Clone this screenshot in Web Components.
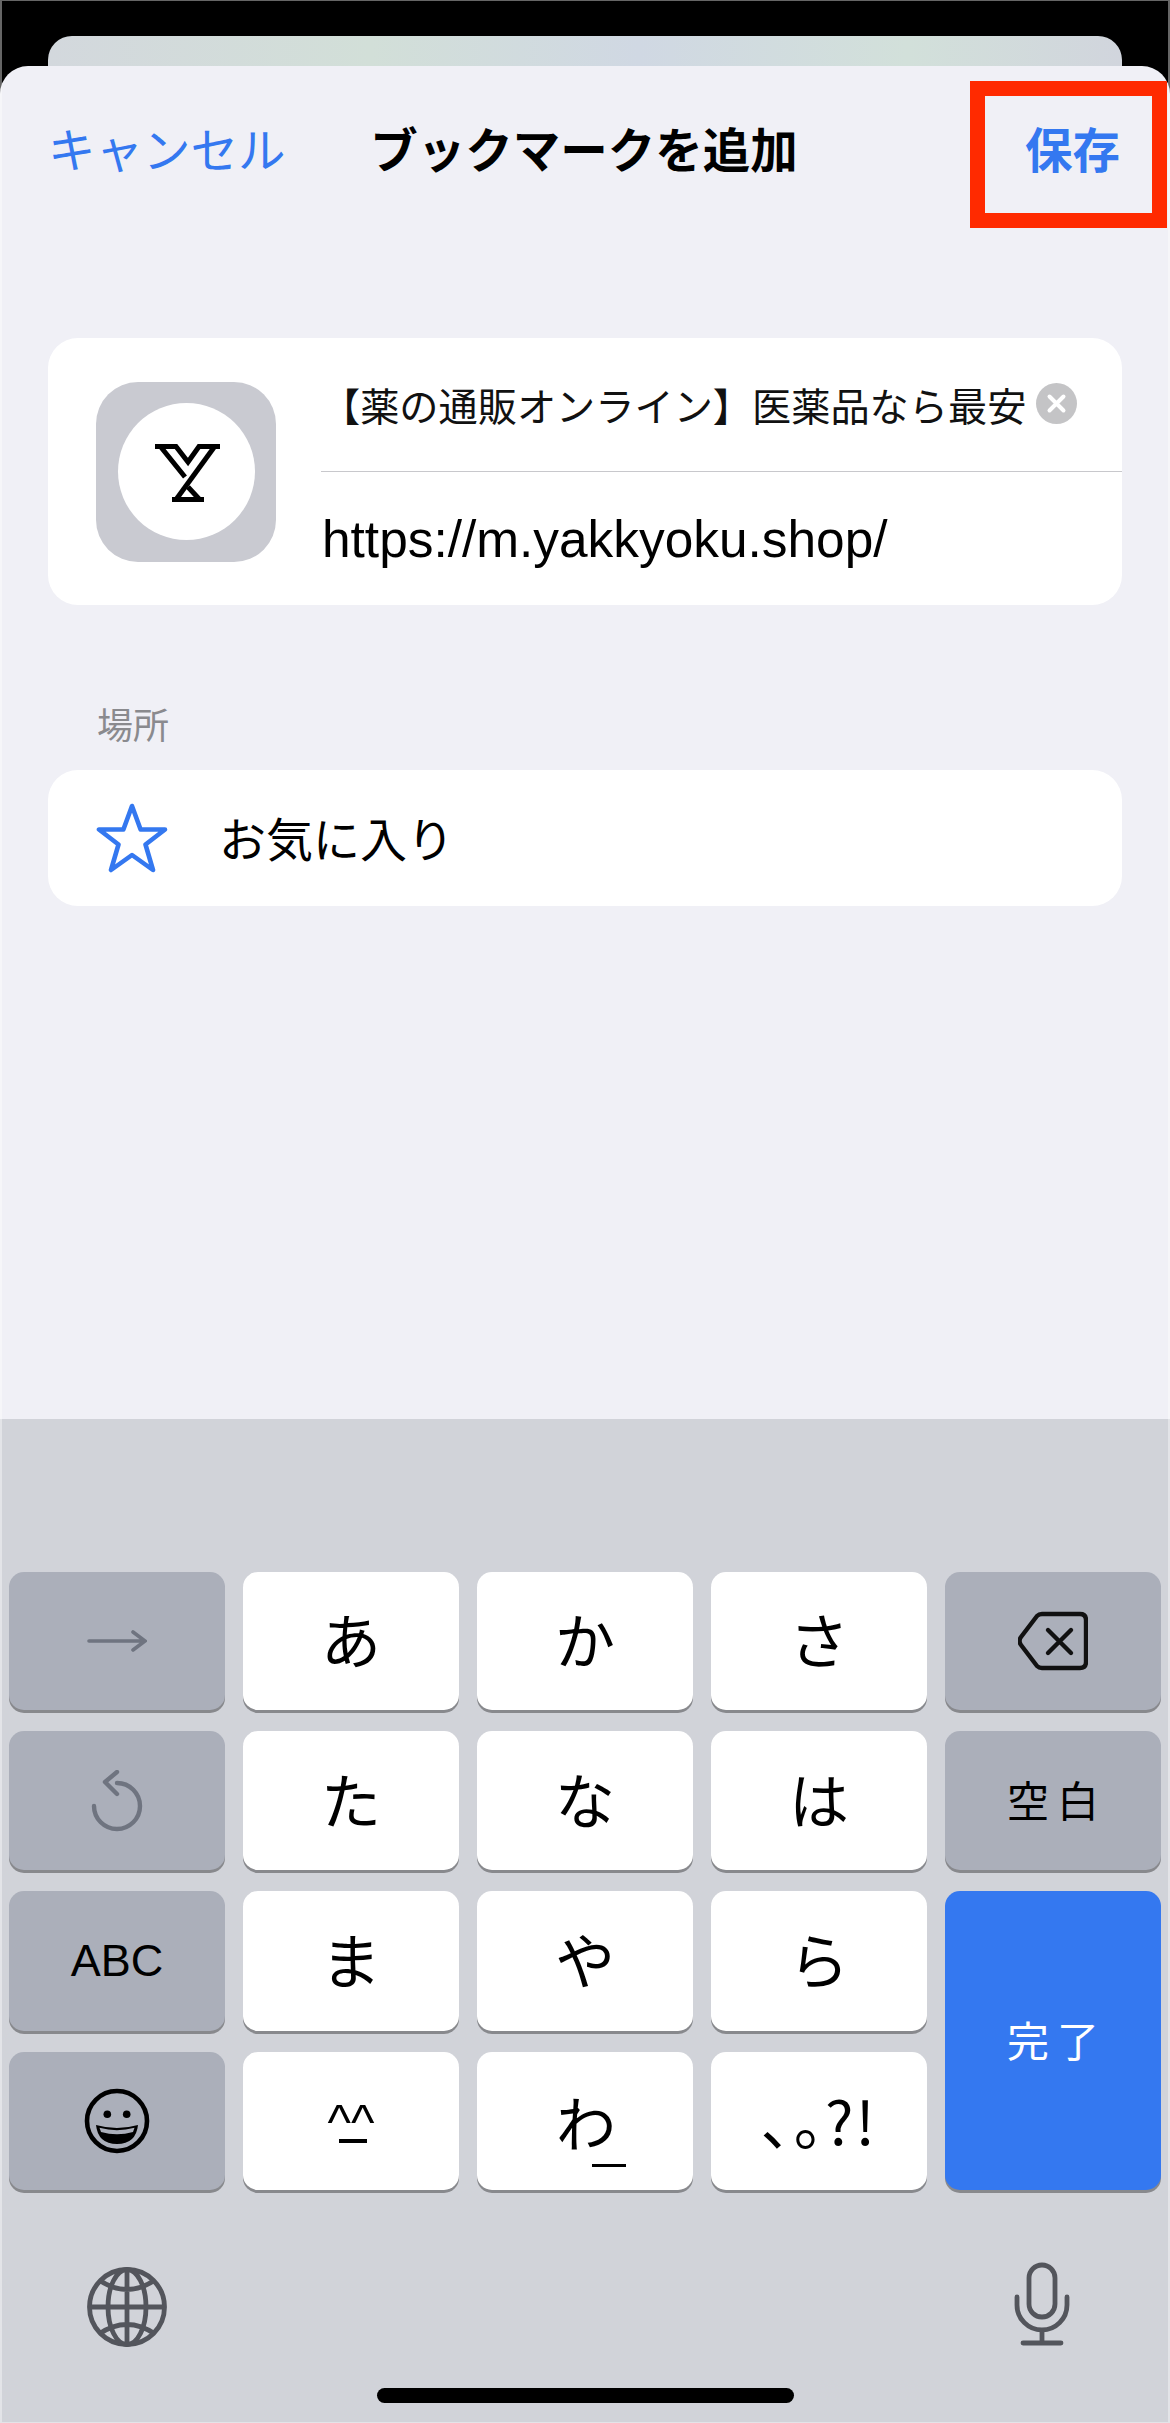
<!DOCTYPE html>
<html lang="ja">
<head>
<meta charset="utf-8">
<title>ブックマークを追加</title>
<style>
html, body { margin: 0; height: 100%; }
body {
  background: #000;
  font-family: "Liberation Sans", "Noto Sans CJK JP", sans-serif;
  overflow: hidden;
}
</style>
</head>
<body>
<bookmark-screen>
  <bookmark-nav slot="nav">
    <span slot="cancel">キャンセル</span>
    <span slot="title">ブックマークを追加</span>
    <span slot="save">保存</span>
  </bookmark-nav>
  <bookmark-card slot="content" name="【薬の通販オンライン】医薬品なら最安" url="https://m.yakkyoku.shop/"></bookmark-card>
  <location-row slot="content" label="場所" value="お気に入り"></location-row>
  <kana-keyboard slot="keyboard"></kana-keyboard>
</bookmark-screen>

<script>
const BLUE = '#3478f0';
const JP = '"Noto Sans CJK JP", "Liberation Sans", sans-serif';

class BookmarkScreen extends HTMLElement {
  constructor() {
    super();
    this.attachShadow({mode: 'open'}).innerHTML = `
<style>
:host { display: block; position: relative; width: 1170px; height: 2423px; background: #000; }
.peek { height: 66px; box-sizing: border-box; padding: 36px 48px 0; }
.peek div {
  height: 30px;
  border-radius: 24px 24px 0 0;
  background: linear-gradient(90deg, #d3d8dd, #d2dfd8 30%, #d0d8e3 55%, #d2e0da 80%, #d1d5dd);
}
.sheet {
  height: 1353px;
  background: #f0f0f6;
  border-radius: 28px 28px 0 0;
  overflow: hidden;
}
.edge {
  position: absolute;
  inset: 0;
  border: solid rgba(255, 255, 255, .4);
  border-width: 1px 2px 1px 2px;
  pointer-events: none;
}
</style>
<div class="peek"><div></div></div>
<div class="sheet">
  <slot name="nav"></slot>
  <slot name="content"></slot>
</div>
<slot name="keyboard"></slot>
<div class="edge"></div>`;
  }
}

class BookmarkNav extends HTMLElement {
  constructor() {
    super();
    this.attachShadow({mode: 'open'}).innerHTML = `
<style>
:host {
  display: grid;
  grid-template-columns: 1fr auto 1fr;
  align-items: center;
  height: 168px;
  box-sizing: border-box;
  padding: 0 50px 6px 48px;
  position: relative;
  font-family: ${JP};
  font-size: 47.5px;
  color: ${BLUE};
}
.title { color: #000; font-weight: 700; }
.save { justify-self: end; font-weight: 700; }
.mark {
  position: absolute;
  left: 970px; top: 15px;
  width: 197px; height: 147px;
  box-sizing: border-box;
  border: 15px solid #ff2a00;
}
</style>
<div><slot name="cancel"></slot></div>
<div class="title"><slot name="title"></slot></div>
<div class="save"><slot name="save"></slot></div>
<div class="mark"></div>`;
  }
}

class BookmarkCard extends HTMLElement {
  constructor() {
    super();
    const root = this.attachShadow({mode: 'open'});
    root.innerHTML = `
<style>
:host {
  display: grid;
  grid-template-columns: 180px 1fr;
  column-gap: 45px;
  align-items: center;
  height: 267px;
  box-sizing: border-box;
  margin: 104px 48px 0 48px;
  padding-left: 48px;
  background: #fff;
  border-radius: 30px;
}
.icon {
  width: 180px; height: 180px;
  border-radius: 42px;
  background: #c9cad1;
  display: flex;
  align-items: center;
  justify-content: center;
}
.disc {
  width: 137px; height: 137px;
  border-radius: 50%;
  background: #fff;
  display: flex;
  align-items: center;
  justify-content: center;
}
.fields { align-self: stretch; display: grid; grid-template-rows: 134px 1fr; }
.name {
  display: flex;
  align-items: center;
  border-bottom: 1px solid #c8c8cc;
  font: 39.2px ${JP};
  color: #111;
  white-space: nowrap;
  padding-bottom: 2px;
  box-sizing: border-box;
}
.clear {
  width: 41px; height: 41px;
  margin-left: 10px;
  flex: none;
}
.url {
  display: flex;
  align-items: center;
  font-size: 51.4px;
  color: #000;
  padding: 1px 0 0 1px;
}
</style>
<div class="icon">
  <div class="disc">
    <svg width="65" height="58" viewBox="0 0 65 58" style="margin: 3px 0 0 3px">
      <g fill="none" stroke="#000" stroke-width="5">
        <path d="M0 2.5H21L33 18L44 2.5H65"/>
        <path d="M5 2L30 33M33 43L46 57"/>
        <path d="M60 2L20 57"/>
        <path d="M17 55.5H49"/>
      </g>
    </svg>
  </div>
</div>
<div class="fields">
  <div class="name">
    <span></span>
    <svg class="clear" viewBox="0 0 41 41">
      <circle cx="20.5" cy="20.5" r="20.5" fill="#c4c4c6"/>
      <path d="M13.5 13.5l14 14m0-14l-14 14" stroke="#fff" stroke-width="4" stroke-linecap="round"/>
    </svg>
  </div>
  <div class="url"></div>
</div>`;
    root.querySelector('.name span').textContent = this.getAttribute('name');
    root.querySelector('.url').textContent = this.getAttribute('url');
  }
}

class LocationRow extends HTMLElement {
  constructor() {
    super();
    const root = this.attachShadow({mode: 'open'});
    root.innerHTML = `
<style>
:host { display: block; margin: 101px 48px 0 48px; font-family: ${JP}; }
.label { font-size: 36px; line-height: 34px; color: #8a8a8e; padding-left: 49px; height: 64px; }
.row {
  display: flex;
  align-items: center;
  height: 136px;
  box-sizing: border-box;
  background: #fff;
  border-radius: 30px;
  padding: 0 0 0 48px;
  font-size: 47px;
  color: #000;
}
.value { position: relative; top: -2px; }
svg { margin-right: 51px; flex: none; }
</style>
<div class="label"></div>
<div class="row">
  <svg width="72" height="70" viewBox="0 0 72 70">
    <path fill="none" stroke="${BLUE}" stroke-width="4.6" stroke-linejoin="round"
      d="M36 3L44.6 26.5H69L49.5 41.5L57 67L36 52L15 67L22.5 41.5L3 26.5H27.4Z"/>
  </svg>
  <span class="value"></span>
</div>`;
    root.querySelector('.label').textContent = this.getAttribute('label');
    root.querySelector('.value').textContent = this.getAttribute('value');
  }
}

class KanaKey extends HTMLElement {
  constructor() {
    super();
    this.attachShadow({mode: 'open'}).innerHTML = `
<style>
:host {
  display: flex;
  align-items: center;
  justify-content: center;
  box-sizing: border-box;
  border-radius: 15px;
  background: #fff;
  color: #000;
  box-shadow: 0 3px 0 #88898d;
  font: 60px/60px ${JP};
}
:host(:not([kind])) { padding-bottom: 6px; }
:host([kind=fn]) { background: #abafba; }
:host([kind=go]) { background: #3478f0; color: #fff; }
:host([small]) { font-size: 42px; letter-spacing: 8px; padding: 0 0 4px 8px; }
</style>
<slot></slot>`;
  }
}

class KanaKeyboard extends HTMLElement {
  constructor() {
    super();
    this.attachShadow({mode: 'open'}).innerHTML = `
<style>
:host {
  display: block;
  height: 1004px;
  box-sizing: border-box;
  background: #d1d3d9;
  padding-top: 153px;
}
.keys {
  display: grid;
  grid-template-columns: repeat(5, 216px);
  grid-template-rows: 138px 139px 140px 138px;
  gap: 21px 18px;
  padding-left: 9px;
}
.go { grid-column: 5; grid-row: 3 / span 2; }
.abc { font: 45px "Liberation Sans", sans-serif; }
.faces { position: relative; font: 50px/50px "Liberation Sans", sans-serif; top: 1px; }
.faces i { position: absolute; left: 11px; top: 42px; width: 28px; height: 4px; background: #000; }
.wa { position: relative; left: 1px; }
.wa i { position: absolute; left: 36px; top: 73px; width: 34px; height: 2.5px; background: #000; }
.punct { font: 60px/60px ${JP}; font-feature-settings: "palt"; letter-spacing: 2px; position: relative; top: -2px; }
.bottom {
  display: flex;
  justify-content: space-between;
  align-items: flex-start;
  margin-top: 72px;
  height: 84px;
  padding: 0 100px 0 87px;
}
.globe { margin-top: 5px; }
.bar { width: 417px; height: 15px; margin: 42px auto 0; background: #000; border-radius: 8px; }
</style>
<div class="keys">
  <kana-key kind="fn">
    <svg width="60" height="24" viewBox="0 0 60 24"><path d="M2 12H57M46 3L58 12L46 21" fill="none" stroke="#6f7480" stroke-width="3.6" stroke-linecap="round"/></svg>
  </kana-key>
  <kana-key>あ</kana-key>
  <kana-key>か</kana-key>
  <kana-key>さ</kana-key>
  <kana-key kind="fn">
    <svg width="70" height="60" viewBox="0 0 70 60"><g fill="none" stroke="#111" stroke-width="4.4" stroke-linecap="round" stroke-linejoin="round"><path d="M24 3H62Q68 3 68 9V51Q68 57 62 57H24Q21 57 19 55L3 34Q0 30 3 26L19 5Q21 3 24 3Z"/><path d="M30 19L53 42M53 19L30 42"/></g></svg>
  </kana-key>

  <kana-key kind="fn">
    <svg width="52" height="62" viewBox="0 0 52 62"><g fill="none" stroke="#6f7480" stroke-width="4.4" stroke-linecap="round" stroke-linejoin="round"><path d="M26 13A23 23 0 1 1 3 36"/><path d="M26 2L14 12L26 24"/></g></svg>
  </kana-key>
  <kana-key>た</kana-key>
  <kana-key>な</kana-key>
  <kana-key>は</kana-key>
  <kana-key kind="fn" small>空白</kana-key>

  <kana-key kind="fn"><span class="abc">ABC</span></kana-key>
  <kana-key>ま</kana-key>
  <kana-key>や</kana-key>
  <kana-key>ら</kana-key>
  <kana-key kind="go" small class="go">完了</kana-key>

  <kana-key kind="fn">
    <svg width="66" height="66" viewBox="0 0 66 66">
      <circle cx="33" cy="33" r="30" fill="none" stroke="#000" stroke-width="4.6"/>
      <circle cx="23.3" cy="26.3" r="3.8"/><circle cx="42.7" cy="26.3" r="3.8"/>
      <path d="M12 37Q33 43 54 37Q52 56 33 56Q14 56 12 37Z"/>
      <path d="M15.5 39.8Q33 44.5 50.5 39.8L49 44Q33 48.5 17 44Z" fill="#abafba"/>
    </svg>
  </kana-key>
  <kana-key kind="sym"><span class="faces">^^<i></i></span></kana-key>
  <kana-key kind="sym"><span class="wa">わ<i></i></span></kana-key>
  <kana-key kind="sym"><span class="punct">、。?!</span></kana-key>
</div>
<div class="bottom">
  <svg class="globe" width="80" height="80" viewBox="0 0 80 80">
    <g fill="none" stroke="#53555c" stroke-width="4.8">
      <circle cx="40" cy="40" r="37.5"/>
      <ellipse cx="40" cy="40" rx="19" ry="37.5"/>
      <path d="M40 3V77M3 40H77M12 13Q40 32 68 13M12 67Q40 48 68 67"/>
    </g>
  </svg>
  <svg width="56" height="84" viewBox="0 0 56 84">
    <g fill="none" stroke="#53555c" stroke-width="4.8" stroke-linecap="round">
      <rect x="15" y="3" width="26" height="52" rx="13"/>
      <path d="M3 35V43A25 25 0 0 0 53 43V35M28 68V81M9 81H47"/>
    </g>
  </svg>
</div>
<div class="bar"></div>`;
  }
}

customElements.define('bookmark-screen', BookmarkScreen);
customElements.define('bookmark-nav', BookmarkNav);
customElements.define('bookmark-card', BookmarkCard);
customElements.define('location-row', LocationRow);
customElements.define('kana-key', KanaKey);
customElements.define('kana-keyboard', KanaKeyboard);
</script>
</body>
</html>
